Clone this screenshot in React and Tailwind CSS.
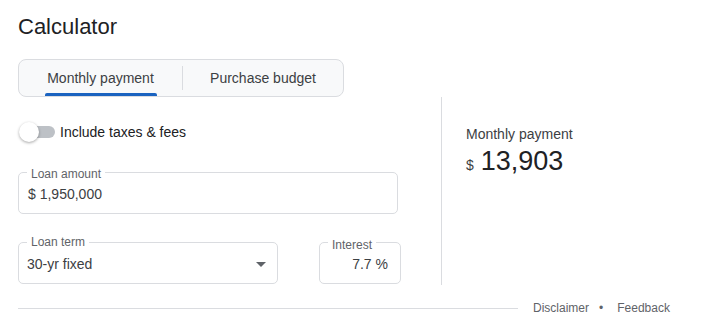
import { useState } from 'react';

function Field({ label, className, labelClass = '-top-[8px]', children }) {
  return (
    <div className={`relative rounded-[5px] border border-[#dadce0] h-[42px] flex items-center ${className}`}>
      <span className={`absolute left-[8px] bg-white px-[4px] text-[12px] leading-[14px] text-[#5f6368] ${labelClass}`}>
        {label}
      </span>
      {children}
    </div>
  );
}

export default function App() {
  const [tab, setTab] = useState(0);
  const [taxes, setTaxes] = useState(false);

  return (
    <div className="w-[708px] h-[322px] bg-white text-[#202124] font-['Liberation_Sans',Arial,sans-serif] px-[18px] pt-[12px] overflow-hidden">
      <h1 className="text-[22px] leading-[30px]">Calculator</h1>

      {/* Tabs */}
      <div className="mt-[17px] w-[326px] h-[38px] rounded-[8px] border border-[#dadce0] bg-[#f8f9fa] flex items-center">
        <button onClick={() => setTab(0)} className="relative w-[163px] h-full flex items-center justify-center text-[14px] text-[#3c4043]">
          Monthly payment
          {tab === 0 && <span className="absolute bottom-0 left-[26px] w-[112px] h-[3px] rounded-t-[2px] bg-[#1a63c0]" />}
        </button>
        <span className="w-px h-[24px] bg-[#dadce0]" />
        <button onClick={() => setTab(1)} className="relative flex-1 h-full flex items-center justify-center text-[14px] text-[#3c4043]">
          Purchase budget
          {tab === 1 && <span className="absolute bottom-0 left-[26px] w-[112px] h-[3px] rounded-t-[2px] bg-[#1a63c0]" />}
        </button>
      </div>

      <div className="flex">
        {/* Left column */}
        <div className="w-[423px] pt-[24px]">
          <div className="flex items-center h-[22px]">
            <button onClick={() => setTaxes(!taxes)} className="relative w-[38px] h-[22px] flex items-center">
              <span className={`ml-[2px] w-[35px] h-[12px] rounded-full ${taxes ? 'bg-[#8ab4f8]' : 'bg-[#bdc1c6]'}`} />
              <span className={`absolute top-[1px] w-[20px] h-[20px] rounded-full shadow-[0_1px_3px_rgba(0,0,0,0.35)] ${taxes ? 'left-[18px] bg-[#1a73e8]' : 'left-[1px] bg-white'}`} />
            </button>
            <span className="ml-[4px] text-[14px] text-[#202124]">Include taxes &amp; fees</span>
          </div>

          <Field label="Loan amount" labelClass="-top-[6px]" className="mt-[29px] w-[380px] px-[9px] pt-[2px]">
            <span className="text-[14px] text-[#3c4043]">$ 1,950,000</span>
          </Field>

          <div className="flex mt-[28px]">
            <Field label="Loan term" className="w-[260px] pl-[8px] pr-[11px] justify-between">
              <span className="text-[14px] text-[#3c4043] pt-[2px]">30-yr fixed</span>
              <svg width="10" height="5" viewBox="0 0 10 5" className="mt-[2px]"><path d="M0 0h10L5 5z" fill="#5f6368" /></svg>
            </Field>
            <Field label="Interest" labelClass="-top-[5px]" className="ml-[41px] w-[82px] pr-[12px] justify-end">
              <span className="text-[14px] text-[#3c4043] pt-[2px]">7.7 %</span>
            </Field>
          </div>
        </div>

        {/* Right column */}
        <div className="h-[188px] border-l border-[#dadce0] pl-[24px] pt-[29px]">
          <div className="text-[14px] text-[#3c4043] leading-[16px]">Monthly payment</div>
          <div className="flex items-baseline mt-[3px]">
            <span className="text-[14px] text-[#3c4043] mr-[7px]">$</span>
            <span className="text-[27px] leading-[32px] text-[#202124]">13,903</span>
          </div>
        </div>
      </div>

      {/* Footer */}
      <div className="flex items-center mt-[14px]">
        <span className="w-[500px] h-px bg-[#dadce0]" />
        <span className="ml-[15px] text-[12px] text-[#5f6368]">Disclaimer</span>
        <span className="ml-[10px] mr-[14px] text-[12px] text-[#5f6368]">•</span>
        <span className="text-[12px] text-[#5f6368]">Feedback</span>
      </div>
    </div>
  );
}
